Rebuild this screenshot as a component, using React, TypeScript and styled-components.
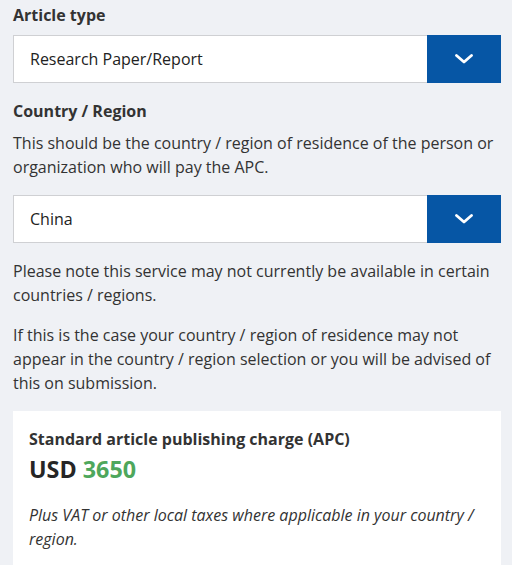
import React from "react";
import styled, { createGlobalStyle } from "styled-components";

const Global = createGlobalStyle`
  html, body { margin: 0; padding: 0; background: #eff1f5; }
  body { font-family: "Open Sans", "Liberation Sans", sans-serif; color: #333; }
  * { box-sizing: border-box; }
`;

const Page = styled.div`
  padding: 3px 11px 0 13px;
  display: flex;
  flex-direction: column;
`;

const Label = styled.div<{ $gap?: number }>`
  font-size: 16px;
  font-weight: 700;
  line-height: 24px;
  margin-bottom: ${(p) => p.$gap ?? 8}px;
`;

const Text = styled.p<{ $italic?: boolean }>`
  margin: 0 0 16px;
  font-size: 16px;
  line-height: 24px;
  font-style: ${(p) => (p.$italic ? "italic" : "normal")};
`;

const Select = styled.div`
  display: flex;
  height: 48px;
  margin-bottom: 16px;
  background: #fff;
  border: 1px solid #cfd0d3;
  border-right: none;
`;

const Value = styled.div`
  flex: 1;
  display: flex;
  align-items: center;
  padding-left: 16px;
  font-size: 16px;
  color: #222;
`;

const Toggle = styled.div`
  width: 74px;
  margin: -1px 0;
  background: #0656a5;
  display: flex;
  align-items: center;
  justify-content: center;
`;

const Card = styled.div`
  background: #fff;
  padding: 16px 16px 14px;
`;

const CardTitle = styled.div`
  font-size: 16px;
  font-weight: 700;
  line-height: 24px;
`;

const Price = styled.div`
  font-size: 23.3px;
  font-weight: 700;
  line-height: 36px;
  margin-bottom: 16px;
  color: #262626;
`;

const Amount = styled.span`
  color: #4ea75c;
`;

const Chevron = () => (
  <svg width="18" height="10" viewBox="0 0 18 10">
    <path d="M1.5 1.5 L9 8 L16.5 1.5" fill="none" stroke="#fff" strokeWidth="2.8" strokeLinecap="round" strokeLinejoin="round" />
  </svg>
);

const Dropdown = ({ value }: { value: string }) => (
  <Select>
    <Value>{value}</Value>
    <Toggle>
      <Chevron />
    </Toggle>
  </Select>
);

export default function App() {
  return (
    <>
      <Global />
      <Page>
        <Label>Article type</Label>
        <Dropdown value="Research Paper/Report" />
        <Label>Country / Region</Label>
        <Text>This should be the country / region of residence of the person or organization who will pay the APC.</Text>
        <Dropdown value="China" />
        <Text>Please note this service may not currently be available in certain countries / regions.</Text>
        <Text>If this is the case your country / region of residence may not appear in the country / region selection or you will be advised of this on submission.</Text>
        <Card>
          <CardTitle>Standard article publishing charge (APC)</CardTitle>
          <Price>
            USD <Amount>3650</Amount>
          </Price>
          <Text $italic>Plus VAT or other local taxes where applicable in your country / region.</Text>
        </Card>
      </Page>
    </>
  );
}
